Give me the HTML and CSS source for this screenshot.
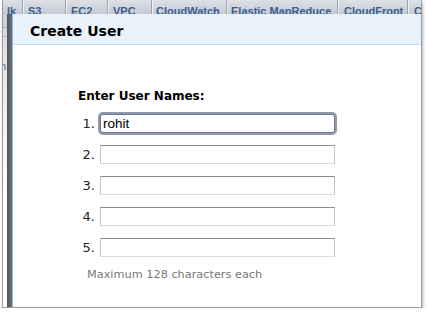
FILE: index.html
```html
<!DOCTYPE html>
<html>
<head>
<meta charset="utf-8">
<link rel="stylesheet" href="styles.css">
</head>
<body>
<div class="frame">
  <div class="tabbar">
    <span class="tab tab-first">lk</span>
    <span class="tab tab-s3">S3</span>
    <span class="tab tab-ec2">EC2</span>
    <span class="tab tab-vpc">VPC</span>
    <span class="tab tab-cw">CloudWatch</span>
    <span class="tab tab-emr">Elastic MapReduce</span>
    <span class="tab tab-cf">CloudFront</span>
    <span class="tab tab-last">C</span>
  </div>
  <div class="sidenav">
    <div class="nav-light">
      <div class="nav-head"></div>
      <div class="nav-sub"></div>
      <div class="nav-item">n</div>
    </div>
    <div class="nav-dark"></div>
  </div>
  <div class="modal">
    <div class="modal-head">Create User</div>
    <div class="modal-body">
      <div class="form-title">Enter User Names:</div>
      <div class="rows">
        <label class="num">1.</label><input class="field focused" type="text" value="rohit">
        <label class="num">2.</label><input class="field" type="text">
        <label class="num">3.</label><input class="field" type="text">
        <label class="num">4.</label><input class="field" type="text">
        <label class="num">5.</label><input class="field" type="text">
      </div>
      <div class="hint">Maximum 128 characters each</div>
    </div>
  </div>
</div>
</body>
</html>
```

FILE: styles.css
```css
html, body {
  margin: 0;
  padding: 0;
  background: #ffffff;
}

.frame {
  margin-left: 2px;
  width: 418px;
  height: 307px;
  border: 1px solid #9c9c9c;
  border-top: none;
  box-shadow: 1px 2px 3px rgba(0, 0, 0, 0.3);
  display: grid;
  grid-template-columns: 9px 1fr;
  grid-template-rows: 14px 1fr;
  overflow: hidden;
  background: #ffffff;
}

.tabbar {
  grid-column: 1 / 3;
  grid-row: 1;
  display: flex;
  overflow: hidden;
  background: linear-gradient(#dde1e6, #c4cad2);
  font-family: "Liberation Sans", Arial, sans-serif;
  font-weight: bold;
  font-size: 11px;
  line-height: 13px;
  color: #3b5e92;
}

.tab {
  flex: none;
  box-sizing: border-box;
  padding-top: 5px;
  padding-left: 5px;
  white-space: nowrap;
  border-left: 1px solid #9aa3ae;
  box-shadow: inset 1px 0 0 #eef0f3;
}

.tab-first {
  width: 19px;
  padding-left: 4px;
  border-left: none;
  box-shadow: none;
}
.tab-s3 { width: 43px; }
.tab-ec2 { width: 42px; }
.tab-vpc { width: 44px; }
.tab-cw { width: 75px; padding-left: 4px; }
.tab-emr { width: 111px; padding-left: 4px; }
.tab-cf { width: 70px; padding-left: 6px; }
.tab-last { width: 20px; padding-left: 6px; }

.sidenav {
  grid-column: 1;
  grid-row: 2;
  display: flex;
}

.nav-light {
  width: 4px;
  background: linear-gradient(#d3d9e1 0, #e6e8ec 60px, #ffffff 180px);
  overflow: hidden;
}

.nav-head {
  height: 13px;
  background: #c9d2de;
  border-bottom: 1px solid #aab2bc;
}

.nav-sub {
  height: 8px;
  background: #d6d9dd;
  border-bottom: 1px solid #b8bec6;
}

.nav-item {
  margin-top: 23px;
  font-family: "Liberation Sans", Arial, sans-serif;
  font-size: 11px;
  line-height: 12px;
  color: #3b5e92;
  margin-left: -3px;
}

.nav-dark {
  width: 5px;
  background: linear-gradient(to right, #4f545b, #6c7178);
}

.modal {
  grid-column: 2;
  grid-row: 2;
  border-left: 1px solid #8fb3e0;
  background: #ffffff;
  display: flex;
  flex-direction: column;
}

.modal-head {
  padding: 9px 17px 4px;
  background: #e9f1fb;
  border-bottom: 1px solid #c6daef;
  font-family: "DejaVu Sans", Verdana, sans-serif;
  font-weight: bold;
  font-size: 14px;
  line-height: 17px;
  color: #000000;
}

.modal-body {
  padding: 44px 0 0 65px;
  font-family: "DejaVu Sans", Verdana, sans-serif;
}

.form-title {
  font-weight: bold;
  font-size: 12px;
  line-height: 14px;
  color: #000000;
}

.rows {
  margin-top: 11px;
  display: grid;
  grid-template-columns: 17px 235px;
  column-gap: 5px;
  row-gap: 12px;
  align-items: center;
}

.num {
  font-size: 13px;
  line-height: 19px;
  color: #222222;
  text-align: right;
  white-space: nowrap;
}

.field {
  box-sizing: border-box;
  width: 235px;
  height: 19px;
  margin: 0;
  padding: 0 2px;
  border: 1px solid #c4c4c4;
  border-top-color: #8a8a8a;
  border-bottom-color: #dadada;
  background: #ffffff;
  font-family: "Liberation Sans", Arial, sans-serif;
  font-size: 13.5px;
  color: #000000;
  outline: none;
}

.field.focused {
  border: 1px solid #6f7c8d;
  border-radius: 3px;
  box-shadow: 0 0 0 2px #8e9aab;
}

.hint {
  margin-top: 11px;
  padding-left: 9px;
  font-size: 11.3px;
  line-height: 13px;
  color: #777777;
}
```
